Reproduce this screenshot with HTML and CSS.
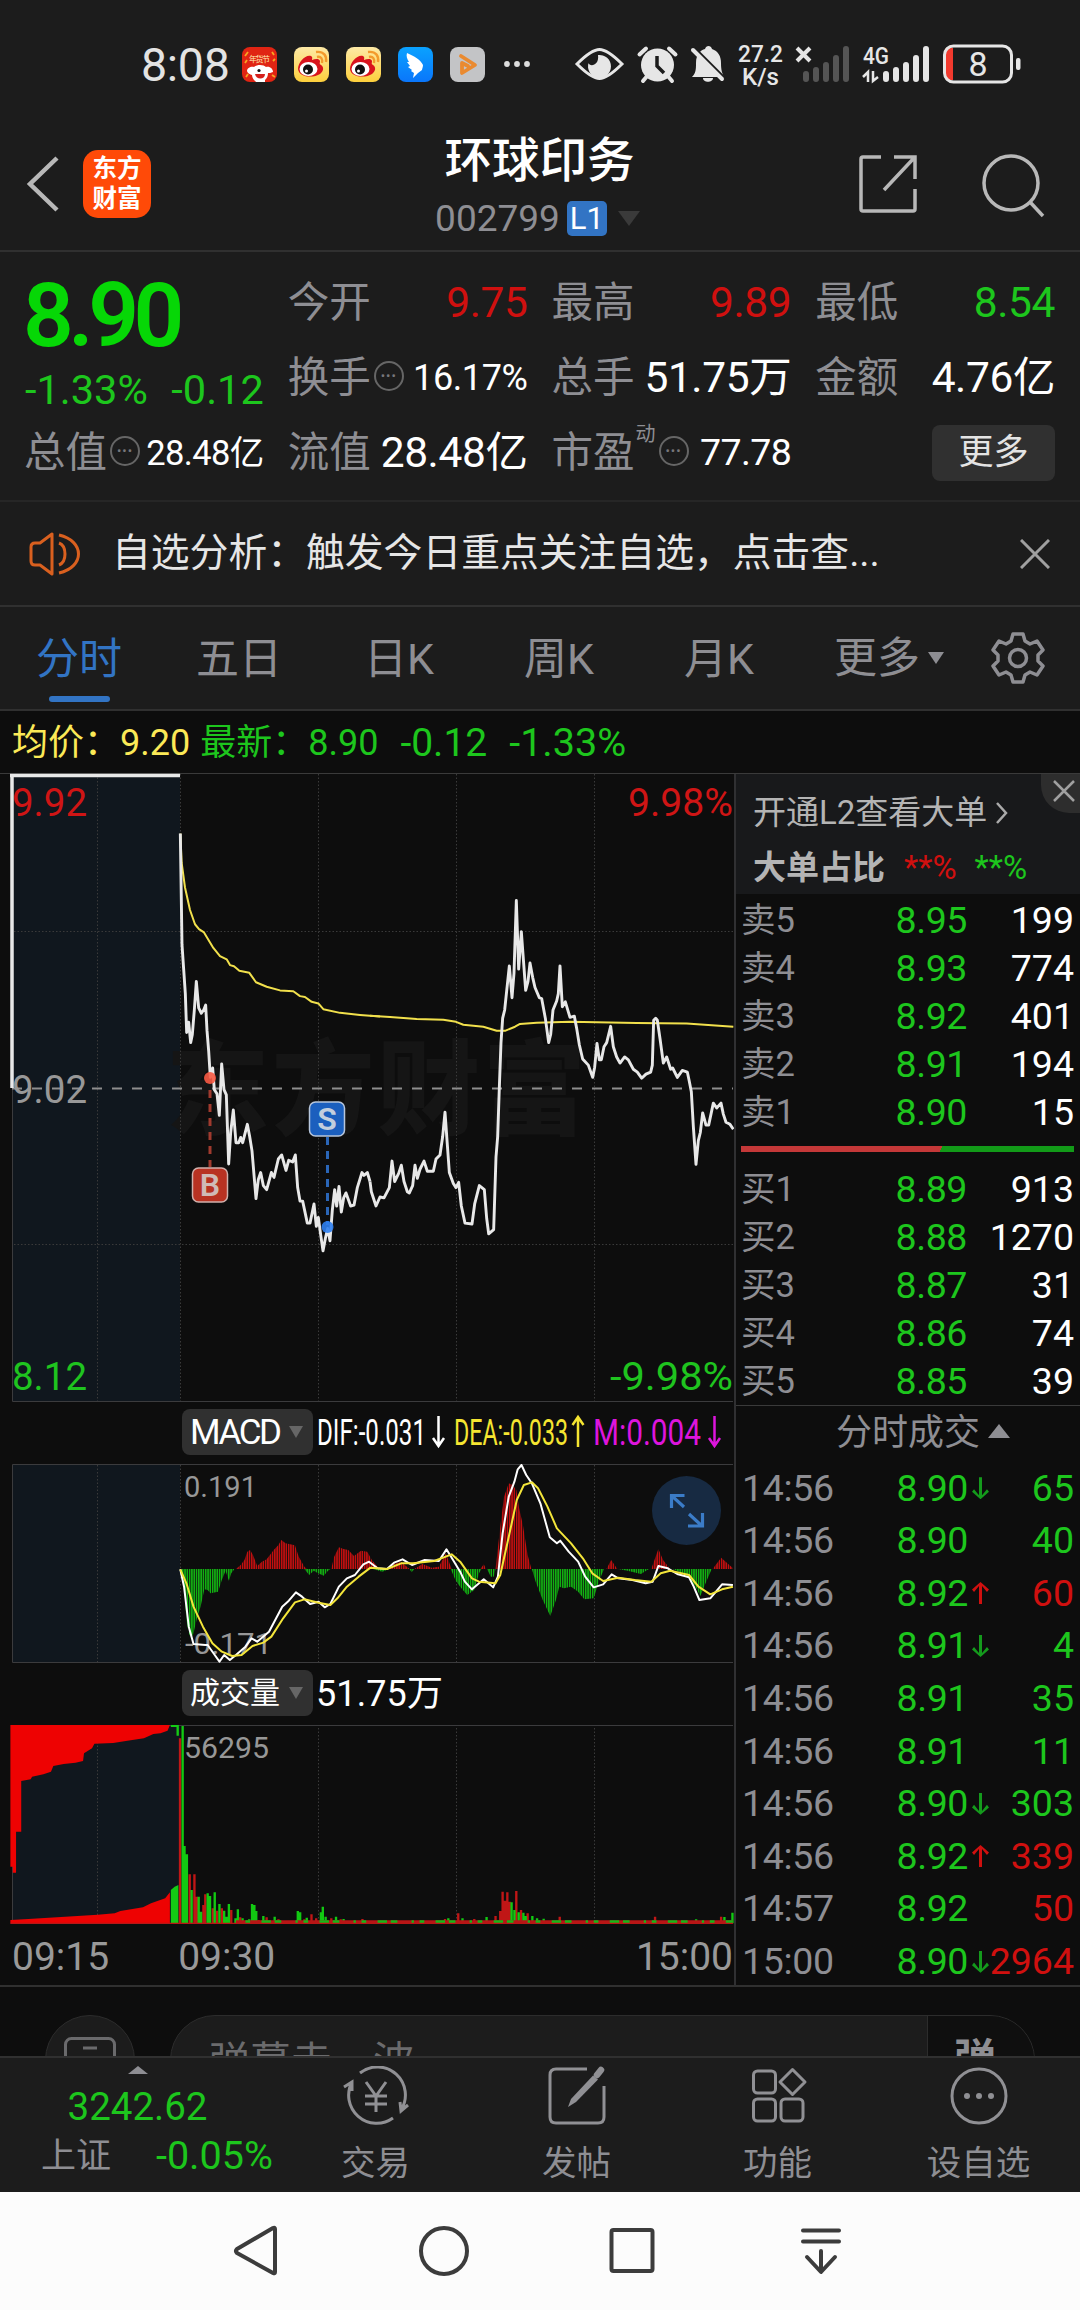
FILE: index.html
```html
<!DOCTYPE html>
<html lang="zh-CN">
<head>
<meta charset="utf-8">
<title>环球印务 002799</title>
<link rel="stylesheet" href="styles.css">
</head>
<body>
<div class="phone">

  <div class="status">
    <span class="clock">8:08</span>
    <svg class="apps" width="290" height="36" viewBox="0 0 290 36">
      <defs>
        <linearGradient id="gold" x1="0" y1="0" x2="0" y2="1"><stop offset="0" stop-color="#fde9a6"/><stop offset="1" stop-color="#fdcf3c"/></linearGradient>
        <linearGradient id="sky" x1="0" y1="0" x2="0" y2="1"><stop offset="0" stop-color="#0aa2ff"/><stop offset="1" stop-color="#0a76fb"/></linearGradient>
        <g id="weibo">
          <rect width="35" height="35" rx="8" fill="url(#gold)"/>
          <path d="M4 22C4 15 12 7 17 9c2 1 1 3 1 4 3-1 7-2 8 1 0 2-1 3 1 4 3 2 3 6-1 9-6 4-21 4-22-5z" fill="#d9131c"/>
          <ellipse cx="14.500" cy="22" rx="9" ry="7" fill="#fff"/>
          <circle cx="14" cy="22.500" r="5" fill="#111"/><circle cx="12.500" cy="24" r="1.500" fill="#fff"/>
          <path d="M23 10c4-1 6 2 5 6M22 5c8-1 11 4 10 10" fill="none" stroke="#f39a2c" stroke-width="2.400"/>
        </g>
      </defs>
      <rect width="35" height="35" rx="8" fill="#e02413"/>
      <path d="M3 9l3-4M3 16l2-3M30 5l2 3M31 14l2-2M4 30l2-3M30 28l3 2" stroke="#f6a623" stroke-width="1.800"/>
      <text x="7" y="15" font-size="8" fill="#ffe9b0" textLength="21">年货节</text>
      <path d="M5 24c0-3 4-5 7-4 4-3 10-2 12 0 4-1 7 2 7 5-2 1-4 1-5 1 0 3-1 5-3 7v2H14c-2-2-4-4-4-7-2-1-4-1-5-4z" fill="#fff"/>
      <path d="M13 27h10c0 6-9 6-10 0z" fill="#d4201c"/><circle cx="17" cy="23.500" r="1.600" fill="#111"/>
      <use href="#weibo" x="52"/><use href="#weibo" x="104"/>
      <g transform="translate(156 0)"><rect width="35" height="35" rx="8" fill="url(#sky)"/>
      <path d="M9 6c7 3 14 7 16 12 0 2-1 4-1 5l-4 3-5 5 1-5-3-2 1-1-4-3 2-1-3-4 2 0c-2-3-3-6-2-9z" fill="#fff"/></g>
      <g transform="translate(208 0)"><rect width="35" height="35" rx="8" fill="#c3c4c6"/>
      <path d="M11 9l14 9-13 8V16l6 3" fill="none" stroke="#ea8a2f" stroke-width="3.800" stroke-linecap="round" stroke-linejoin="round"/></g>
      <g fill="#ddd"><circle cx="265" cy="17" r="2.900"/><circle cx="275" cy="17" r="2.900"/><circle cx="285" cy="17" r="2.900"/></g>
    </svg>
    <svg class="sys" width="465" height="60" viewBox="0 0 465 60" fill="#e6e6e6">
      <path d="M12 28C22 18 29 13.500 34.500 13.500S47 18 57 28C47 38 40 42.500 34.500 42.500S22 38 12 28z" fill="none" stroke="#e6e6e6" stroke-width="3"/>
      <path d="M33 19A11.500 11.500 0 1 1 23.500 27c1 4 11 3 9.500-8z"/>
      <circle cx="92.500" cy="29" r="16.500"/><path d="M74.500 18.500l6.500-6M110.500 18.500l-6.500-6M78 45l5-6M107 45l-5-6" stroke="#e6e6e6" stroke-width="4" stroke-linecap="round"/>
      <path d="M92 20v10l7 7" fill="none" stroke="#1c1c1c" stroke-width="3.500"/>
      <path d="M127 41c4-4 4-8 4-14 0-9 5-13 9-14 1-4 6-4 7 0 6 2 9 7 9 14 0 7 1 10 3 14zM138 42h10c0 5-10 5-10 0z"/>
      <path d="M127 10l33 33" stroke="#1c1c1c" stroke-width="3.500"/><path d="M128 14l29 29" stroke="#e6e6e6" stroke-width="4" stroke-linecap="round"/>
      <text x="173" y="26" font-size="24" textLength="45" lengthAdjust="spacingAndGlyphs" font-weight="500">27.2</text>
      <text x="177" y="49" font-size="23" textLength="37" lengthAdjust="spacingAndGlyphs" font-weight="500">K/s</text>
      <path d="M232 12l13 13M245 12l-13 13" stroke="#e6e6e6" stroke-width="4"/>
      <g stroke="#555" stroke-width="6" stroke-linecap="round"><path d="M241 38v5M251 34v9M261 29v14M271 22v21M281 13v30"/></g>
      <text x="298" y="28" font-size="24" textLength="26" lengthAdjust="spacingAndGlyphs" font-weight="500">4G</text>
      <path d="M303 46V36l-5 5M308 35v10l5-4" fill="none" stroke="#e6e6e6" stroke-width="2.500"/>
      <g stroke="#e6e6e6" stroke-width="6" stroke-linecap="round"><path d="M321 38v5M331 34v9M341 29v14M351 22v21M361 13v30"/></g>
      <path d="M381 12h7v32h-7c-1 0-1-3-1-6V18c0-3 0-6 1-6z" fill="#f23a2e"/>
      <rect x="379.500" y="10" width="67" height="36" rx="9" fill="none" stroke="#e6e6e6" stroke-width="3"/>
      <rect x="451" y="22" width="4.500" height="12" rx="2"/>
      <text x="403.500" y="40" font-size="34">8</text>
    </svg>
  </div>

  <header class="head">
    <svg class="back" width="34" height="56" viewBox="0 0 34 56" fill="none" stroke="#b8b8b8" stroke-width="4.500"><path d="M31 2L4 28l27 26"/></svg>
    <div class="logo"><span>东方</span><span>财富</span></div>
    <div class="title">
      <h1>环球印务</h1>
      <div class="code"><span>002799</span><b>L1</b><i class="tri"></i></div>
    </div>
    <svg class="share" width="62" height="62" viewBox="0 0 62 62" fill="none" stroke="#b8b8b8" stroke-width="3.500"><path d="M23 4H5q-2 0-2 2v50q0 2 2 2h50q2 0 2-2V36M26 37L56 5M36 4h21v22"/></svg>
    <svg class="search" width="66" height="66" viewBox="0 0 66 66" fill="none" stroke="#b8b8b8" stroke-width="3.500"><circle cx="30" cy="30" r="27"/><path d="M49 49l13 14"/></svg>
  </header>

  <section class="quote">
    <div class="now"><strong>8.90</strong><span class="chg"><em>-1.33%</em><em>-0.12</em></span></div>
    <div class="cell"><label>今开</label><span class="n red">9.75</span></div>
    <div class="cell"><label>最高</label><span class="n red">9.89</span></div>
    <div class="cell"><label>最低</label><span class="n green">8.54</span></div>
    <div class="cell"><label>换手</label><i class="dots">•••</i><span class="n s35">16.17%</span></div>
    <div class="cell"><label>总手</label><span class="n">51.75万</span></div>
    <div class="cell"><label>金额</label><span class="n">4.76亿</span></div>
    <div class="cell"><label>总值</label><i class="dots">•••</i><span class="n s34">28.48亿</span></div>
    <div class="cell"><label>流值</label><span class="n">28.48亿</span></div>
    <div class="cell"><label>市盈<sup>动</sup></label><i class="dots late">•••</i><span class="n s37">77.78</span></div>
    <div class="cell last"><button>更多</button></div>
  </section>

  <section class="notice">
    <svg width="52" height="44" viewBox="0 0 52 44" fill="none" stroke="#d9601f" stroke-width="3"><path d="M23 2v40L11 33H6q-4 0-4-4V15q0-4 4-4h5zM30 11c8 3 8 19 0 22M30 3c26 6 26 32 0 38" stroke-linejoin="round"/></svg>
    <p>自选分析：触发今日重点关注自选，点击查...</p>
    <svg width="30" height="30" viewBox="0 0 30 30" stroke="#a0a0a0" stroke-width="3"><path d="M1 1l28 28M29 1L1 29"/></svg>
  </section>

  <nav class="tabs">
    <a class="on">分时</a><a>五日</a><a>日K</a><a>周K</a><a>月K</a>
    <a class="more">更多<i class="tri"></i></a>
    <svg width="54" height="54" viewBox="0 0 54 54" fill="none" stroke="#8e8e93" stroke-width="3.500" stroke-linejoin="round"><path d="M22 3h10l2 7 5 3 7-3 6 9-5 5v6l5 5-6 9-7-3-5 3-2 7H22l-2-7-5-3-7 3-6-9 5-5v-6l-5-5 6-9 7 3 5-3z"/><circle cx="27" cy="27" r="8.500"/></svg>
  </nav>

  <div class="latest"><span class="avg">均价：9.20</span><span>最新：8.90</span><span class="d">-0.12</span><span class="p">-1.33%</span></div>

  <main class="board">
    <div class="charts">
      <svg class="plot" width="734" height="629" viewBox="0 773 734 629">
        <rect x="12" y="774" width="168" height="627" fill="#10171e"/>
        <text x="166" y="1127" font-size="103" font-weight="900" fill="#151515" textLength="420">东方财富</text>
        <g stroke="#3a3a3a" stroke-width="1" stroke-dasharray="1.500 2">
          <path d="M97.500 774V1401M180.500 774V1401M318.500 774V1401M456.500 774V1401M594.500 774V1401M14 931.500H733M14 1244.500H733"/>
        </g>
        <path d="M12.500 774V1401.500H733" fill="none" stroke="#3b3b3d"/>
        <path d="M12 1088.500H733" stroke="#8e8e8e" stroke-width="2" stroke-dasharray="10 10"/>
        <g font-size="39">
          <text x="12" y="816" fill="#cf1515" textLength="75" lengthAdjust="spacingAndGlyphs">9.92</text>
          <text x="12" y="1103" fill="#989898" textLength="75" lengthAdjust="spacingAndGlyphs">9.02</text>
          <text x="12" y="1390" fill="#1fc41f" textLength="75" lengthAdjust="spacingAndGlyphs">8.12</text>
          <text x="628" y="816" fill="#cf1515" textLength="105" lengthAdjust="spacingAndGlyphs">9.98%</text>
          <text x="610" y="1390" fill="#1fc41f" textLength="123" lengthAdjust="spacingAndGlyphs">-9.98%</text>
        </g>
        <path d="M12 1088V776" stroke="#e8e8e8" stroke-width="3.500"/><path d="M10 775.500H180" stroke="#e8e8e8" stroke-width="3.500"/>
        <g class="line" transform="translate(0 765) scale(.33333 .40833)">
          <polyline stroke="#f1e04c" stroke-width="2" points="541,168 545,240 555,300 570,355 585,390 597,402 612,410 640,448 660,468 680,476 690,490 702,493 718,504 748,509 768,532 800,543 840,552 880,554 900,566 915,568 935,580 955,584 970,598 1020,607 1080,612 1140,616"/>
          <polyline stroke="#e8e8e8" stroke-width="2.900" points="541,168 546,440 551,500 556,560 560,655 566,630 572,680 577,660 583,600 589,530 596,595 604,608 611,600 617,588 621,650 626,700 631,765 638,742 643,795 651,805 658,858 665,732 672,795 679,808 686,977 692,900 700,845 708,925 716,925 722,912 728,925 742,880 749,910 756,945 768,1062 775,1015 782,998 790,1030 800,1040 814,998 822,1010 835,965 845,955 858,993 866,968 878,972 886,955 893,1035 900,1068 908,1068 922,1122 930,1122 942,1075 949,1130 955,1108 962,1150 969,1190 976,1160 983,1135 990,1165 997,1090 1004,1040 1010,1080 1017,1032 1024,1095 1031,1060 1038,1048 1052,1080 1062,1078 1072,1035 1086,998 1092,1005 1102,998 1110,1020"/>
        </g>
        <g class="line" transform="translate(370 765) scale(.33333 .40833)">
          <polyline stroke="#f1e04c" stroke-width="2" points="0,614 60,617 140,622 220,624 258,629 280,636 340,641 380,651 405,651 435,641 450,634 500,631 600,629 800,632 950,633 1090,641"/>
          <polyline stroke="#e8e8e8" stroke-width="2.900" points="0,1020 4,1045 18,1080 30,1058 42,1060 58,1035 66,970 74,1020 86,1000 94,980 102,1020 112,1045 118,1048 128,1030 135,980 142,1012 150,990 162,970 172,995 190,995 198,965 210,955 218,910 225,850 232,930 238,998 250,1025 258,1035 266,1022 274,1080 285,1122 306,1124 314,1075 328,1030 343,1040 350,1110 356,1148 371,1138 378,960 383,910 388,790 393,680 398,620 404,600 418,492 426,570 432,510 439,332 446,500 454,408 460,475 467,552 474,530 480,485 488,520 495,545 508,570 515,572 526,620 536,680 542,660 549,600 560,578 565,560 570,492 577,592 586,580 600,618 613,615 620,645 628,685 638,720 655,735 668,765 674,740 681,682 688,722 694,722 702,690 710,680 722,640 730,690 740,715 750,730 764,715 775,722 790,745 802,752 815,767 828,757 842,752 847,735 851,625 857,620 862,625 870,670 880,730 890,715 902,745 908,742 922,765 937,748 952,752 958,775 964,800 970,885 978,978 985,920 991,900 998,852 1008,882 1016,882 1030,828 1040,840 1053,828 1060,855 1068,875 1080,880 1090,892"/>
        </g>
        <path d="M210 1090V1167" stroke="#a03a2e" stroke-width="3" stroke-dasharray="8 6"/><circle cx="210" cy="1078" r="6" fill="#f85a44" opacity=".9"/>
        <rect x="192.500" y="1168" width="35" height="34" rx="6" fill="#b83222" stroke="#d0b0ac" stroke-width="1.500"/>
        <text x="210" y="1196" font-size="32" font-weight="600" fill="#cfbab6" text-anchor="middle">B</text>
        <path d="M327.500 1137V1225" stroke="#2a66b8" stroke-width="3" stroke-dasharray="8 6"/><circle cx="327.500" cy="1227" r="6" fill="#2f7ff0" opacity=".9"/>
        <rect x="309.500" y="1102" width="35" height="34" rx="6" fill="#1b5fbe" stroke="#b7c6dc" stroke-width="1.500"/>
        <text x="327" y="1130" font-size="32" font-weight="600" fill="#c3cedd" text-anchor="middle">S</text>
      </svg>

      <div class="ind">
        <span class="pick"><span class="macd">MACD</span><i class="tri"></i></span>
        <svg width="410" height="46" viewBox="316 1409 410 46" font-size="36">
          <text x="317" y="1445" fill="#fff" textLength="109" lengthAdjust="spacingAndGlyphs">DIF:-0.031</text>
          <text x="454" y="1445" fill="#f5e531" textLength="114" lengthAdjust="spacingAndGlyphs">DEA:-0.033</text>
          <text x="593" y="1445" fill="#dd15dd" textLength="108" lengthAdjust="spacingAndGlyphs">M:0.004</text>
          <g fill="none" stroke-width="2.500"><path d="M438.500 1416V1446M433 1438L438.500 1446L444 1438" stroke="#fff"/><path d="M578 1447V1418M572.500 1425L578 1417L583.500 1425" stroke="#f5e531"/><path d="M714.500 1416V1446M709 1438L714.500 1446L720 1438" stroke="#dd15dd"/></g>
        </svg>
      </div>

      <svg class="plot" width="734" height="199" viewBox="0 1464 734 199">
        <defs>
          <pattern id="rb" width="4.880" height="10" patternUnits="userSpaceOnUse"><rect width="3.400" height="10" fill="#c20f0f"/></pattern>
          <pattern id="gb" width="4.880" height="10" patternUnits="userSpaceOnUse"><rect width="3.400" height="10" fill="#12b012"/></pattern>
        </defs>
        <rect x="12" y="1465" width="168" height="197" fill="#10171e"/>
        <path d="M97.500 1465V1662M180.500 1465V1662M318.500 1465V1662M456.500 1465V1662M594.500 1465V1662" stroke="#3a3a3a" stroke-dasharray="1.500 2"/>
        <path d="M733 1464.500H12.500V1662.500H733" fill="none" stroke="#3b3b3d"/>
        <g font-size="30" fill="#979797"><text x="184" y="1497" textLength="73" lengthAdjust="spacingAndGlyphs">0.191</text><text x="185" y="1654" textLength="87" lengthAdjust="spacingAndGlyphs">-0.171</text></g>
        <g transform="translate(0 1400) scale(.47194 .33333)">
          <path fill="url(#rb)" d="M500,507L510,495 518,480 524,455 530,450 536,465 545,498 555,485 565,478 580,450 590,435 596,420 605,430 625,436 633,470 645,500 650,507ZM702,507L708,470 718,442 728,447 738,450 750,468 765,452 778,455 788,480 800,500 805,507ZM825,507L835,492 850,485 862,500 868,507ZM878,507L895,492 915,503 930,500 945,460 955,500 957,507ZM1018,507L1025,493 1030,507ZM1050,507L1060,380 1068,290 1078,250 1086,255 1094,270 1100,325 1108,375 1118,465 1126,507ZM1285,507L1295,480 1308,507ZM1380,507L1395,447 1405,480 1420,507ZM1510,507L1528,473 1552,503V507Z"/>
          <path fill="url(#gb)" d="M384,507L390,560 395,660 400,700 405,715 410,700 418,650 425,620 433,568 440,570 446,580 462,575 470,540 478,512 485,542 490,520 497,507ZM645,507L655,525 665,512 672,518 686,527 695,512 700,507ZM790,507L810,515 825,507ZM868,507L872,517 878,507ZM955,507L965,540 975,560 990,585 1005,570 1015,520 1020,507ZM1032,507L1040,530 1046,530 1050,507ZM1127,507L1135,545 1150,600 1166,648 1178,600 1185,560 1195,565 1210,560 1225,575 1238,598 1258,595 1270,540 1280,507ZM1310,507L1330,512 1358,522 1375,507ZM1425,507L1440,515 1460,535 1472,555 1484,588 1495,550 1508,507Z"/>
          <g class="line" stroke-width="2">
            <polyline stroke="#fff" points="382,508 390,560 400,680 410,732 435,735 440,735 455,765 465,785 475,765 487,780 500,765 520,740 533,715 545,725 570,695 598,620 612,602 627,577 640,590 657,612 675,605 688,622 700,612 718,560 735,535 752,525 770,493 782,485 800,505 820,507 835,488 853,478 873,495 900,480 930,483 946,448 960,480 975,515 985,545 1000,568 1025,538 1045,562 1055,530 1065,400 1078,290 1090,245 1097,208 1105,195 1115,225 1127,250 1145,310 1165,412 1180,430 1187,422 1205,455 1225,485 1240,530 1258,562 1278,553 1296,523 1310,535 1340,540 1368,550 1383,545 1395,498 1415,505 1435,522 1460,532 1470,560 1482,600 1505,595 1530,553 1553,555"/>
            <polyline stroke="#f3e53a" points="382,508 395,550 410,620 430,680 450,730 470,755 492,768 512,765 535,738 558,728 575,710 600,655 625,607 645,598 675,608 700,615 715,595 735,560 760,530 785,503 820,507 850,490 875,490 920,483 957,463 975,485 1000,535 1015,545 1050,550 1060,525 1075,430 1095,300 1110,255 1127,247 1140,265 1160,320 1180,385 1210,430 1235,475 1255,520 1278,543 1310,533 1345,540 1380,545 1400,520 1420,512 1460,525 1480,560 1505,583 1530,568 1553,560"/>
          </g>
        </g>
        <circle cx="686.500" cy="1510.500" r="34.500" fill="#172a42"/>
        <path d="M684 1507L672 1496M671.500 1508V1495.500H684.500M689 1514L702 1526M702.500 1513V1526H688" fill="none" stroke="#3b7cc8" stroke-width="3.200"/>
      </svg>

      <div class="ind vol">
        <span class="pick"><span>成交量</span><i class="tri"></i></span><span class="v">51.75万</span>
      </div>

      <svg class="plot" width="734" height="199" viewBox="0 1725 734 199">
        <rect x="12" y="1726" width="168" height="197" fill="#10171e"/>
        <path d="M97.500 1728V1923M318.500 1728V1923M456.500 1728V1923M594.500 1728V1923" stroke="#3a3a3a" stroke-dasharray="1.500 2"/>
        <path d="M733 1725.500H12.500V1923.500H733" fill="none" stroke="#3b3b3d"/>
        <text x="184" y="1758" font-size="30" fill="#979797" textLength="85" lengthAdjust="spacingAndGlyphs">56295</text>
        <g transform="translate(0 1660) scale(.47194 .33333)">
          <path fill="#ee0202" d="M22,195H360L355,212 340,220 325,222 305,235 270,242 240,249 200,251 195,265 178,280 176,303 160,308 135,312 113,318 108,335 92,343 68,350 65,358 45,363V515H34V638H27V620H22ZM22,790V780L60,777 207,764 243,760 255,753 303,742 320,730 350,715 360,697V790Z"/>
          <path fill="#14cc14" d="M362,195H379V227H374V201H362ZM362,790V690L370,680 378,675V790Z"/>
          <path stroke="#c01616" stroke-width="5" d="M381.500,790V235M402,790V643M412,790V643M417,790V710M431,790V735M435,790V703M451,790V745M460,790V752M470,790V745M490,790V750M509,790V772M548,790V780M565,790V772M590,790V778M645,790V778M660,790V763M670,790V775M702,790V775M722,790V778M768,790V777M943,790V777M971,790V760M1005,790V777M1050,790V768M1060,790V753M1065,790V695M1070,790V722M1075,790V697M1080,790V725M1094,790V693M1104,790V750M1118,790V760M1186,790V770M1388,790V770M1528,790V770"/>
          <path stroke="#12c912" stroke-width="5" d="M387,790V198M391,790V558M396,790V583M406,790V690M421,790V710M426,790V755M440,790V700M445,790V708M455,790V697M465,790V732M475,790V752M480,790V770M485,790V732M499,790V775M504,790V748M514,790V775M528,790V778M534,790V732M539,790V735M543,790V753M558,790V768M582,790V770M631,790V753M636,790V757M650,790V773M680,790V757M684,790V740M690,790V770M712,790V770M728,790V777M950,790V775M980,790V775M1031,790V771M1084,790V727M1090,790V750M1099,790V757M1109,790V758M1114,790V768M1128,790V768M1138,790V775M1152,790V776M1475,790V778M1535,790V771M1552,790V758"/>
          <path stroke="#b81616" stroke-width="9" d="M500,785H1553"/>
          <path stroke="#18b818" stroke-width="9" stroke-dasharray="10 24 20 8 14 30 5 12" d="M520,785H1553"/>
          <path stroke="#b81616" stroke-width="4" d="M22,790H1553"/>
        </g>
      </svg>

      <div class="times"><span>09:15</span><span class="open">09:30</span><span class="end">15:00</span></div>
    </div>

    <aside class="depth">
      <div class="promo">
        <p>开通L2查看大单<svg width="12" height="22" viewBox="0 0 12 22" fill="none" stroke="#aaa" stroke-width="2.500"><path d="M1 1l9 10-9 10"/></svg></p>
        <p class="share-row"><b>大单占比</b><span class="red">**%</span><span class="green">**%</span></p>
        <span class="close"><svg width="22" height="22" viewBox="0 0 22 22" stroke="#a0a0a0" stroke-width="2.500"><path d="M1 1l20 20M21 1L1 21"/></svg></span>
      </div>
      <ul class="book">
        <li><span>卖5</span><b>8.95</b><em>199</em></li>
        <li><span>卖4</span><b>8.93</b><em>774</em></li>
        <li><span>卖3</span><b>8.92</b><em>401</em></li>
        <li><span>卖2</span><b>8.91</b><em>194</em></li>
        <li><span>卖1</span><b>8.90</b><em>15</em></li>
      </ul>
      <div class="ratio"></div>
      <ul class="book">
        <li><span>买1</span><b>8.89</b><em>913</em></li>
        <li><span>买2</span><b>8.88</b><em>1270</em></li>
        <li><span>买3</span><b>8.87</b><em>31</em></li>
        <li><span>买4</span><b>8.86</b><em>74</em></li>
        <li><span>买5</span><b>8.85</b><em>39</em></li>
      </ul>
      <div class="ticks-title">分时成交<i class="tri up"></i></div>
      <ul class="ticks">
        <li><span>14:56</span><b>8.90</b><i class="dn"></i><em>65</em></li>
        <li><span>14:56</span><b>8.90</b><i></i><em>40</em></li>
        <li><span>14:56</span><b>8.92</b><i class="upw"></i><em class="red">60</em></li>
        <li><span>14:56</span><b>8.91</b><i class="dn"></i><em>4</em></li>
        <li><span>14:56</span><b>8.91</b><i></i><em>35</em></li>
        <li><span>14:56</span><b>8.91</b><i></i><em>11</em></li>
        <li><span>14:56</span><b>8.90</b><i class="dn"></i><em>303</em></li>
        <li><span>14:56</span><b>8.92</b><i class="upw"></i><em class="red">339</em></li>
        <li><span>14:57</span><b>8.92</b><i></i><em class="red">50</em></li>
        <li><span>15:00</span><b>8.90</b><i class="dn"></i><em class="red">2964</em></li>
      </ul>
    </aside>
  </main>

  <div class="danmu">
    <div class="round"><svg width="52" height="46" viewBox="0 0 52 46" fill="none" stroke="#6a6a6c" stroke-width="3"><rect x="1.500" y="1.500" width="49" height="42" rx="6"/><path d="M19 11h14"/></svg></div>
    <div class="field"><span>弹幕走一波</span><b>弹</b></div>
  </div>

  <nav class="bottom">
    <div class="index">
      <i class="tri up"></i>
      <strong>3242.62</strong>
      <span class="sh"><label>上证</label><em>-0.05%</em></span>
    </div>
    <a><svg width="66" height="60" viewBox="0 0 66 60" fill="none" stroke="#909094" stroke-width="3"><path d="M17 7A28 28 0 0 1 58 44M50 52A28 28 0 0 1 9 16M1 21l8-5v9M65 39l-7 6-1-9"/><path d="M23 16l10 14 10-14M33 30v16M22 30h22M22 38h22"/></svg>交易</a>
    <a><svg width="66" height="60" viewBox="0 0 66 60" fill="none" stroke="#909094" stroke-width="3"><path d="M43 3H12q-6 0-6 6v42q0 6 6 6h42q6 0 6-6V20"/><path d="M49 9.500l5 4L32 36l-8 5 3-8z" fill="#909094" stroke="none"/><path d="M53 9l4-5" stroke-width="6.500" stroke-linecap="round"/></svg>发帖</a>
    <a><svg width="66" height="60" viewBox="0 0 66 60" fill="none" stroke="#909094" stroke-width="3"><rect x="8.500" y="5" width="22" height="22" rx="4"/><rect x="8.500" y="33" width="22" height="22" rx="4"/><rect x="36" y="33" width="22" height="22" rx="4"/><path d="M47.500 3.500L60 16 47.500 28.500 35 16z" stroke-linejoin="round"/></svg>功能</a>
    <a><svg width="66" height="60" viewBox="0 0 66 60" fill="none" stroke="#909094" stroke-width="3"><circle cx="33" cy="30" r="27"/><g fill="#909094" stroke="none"><circle cx="21" cy="30" r="3"/><circle cx="33" cy="30" r="3"/><circle cx="45" cy="30" r="3"/></g></svg>设自选</a>
  </nav>

  <div class="sysnav">
    <svg width="1080" height="118" viewBox="0 2192 1080 118" fill="none" stroke="#3c3c3c" stroke-width="4" stroke-linejoin="round" stroke-linecap="round">
      <path d="M275 2229v43q0 2-2 1l-36-20q-2-2 0-4l36-21q2-1 2 1z"/>
      <circle cx="444" cy="2251" r="23"/><rect x="611.500" y="2230" width="41" height="41" rx="2"/>
      <path d="M803 2230.500h36M803 2241.500h36M821 2251v20M807 2257l14 15 14-15"/>
    </svg>
  </div>
</div>
</body>
</html>
```
FILE: styles.css
```css
* { box-sizing: border-box; margin: 0; padding: 0; }
body {
  width: 1080px;
  background: #1c1c1c;
  color: #fff;
  font-family: Roboto, "Noto Sans CJK SC", sans-serif;
  line-height: 1;
}
.phone { width: 1080px; height: 2310px; display: flex; flex-direction: column; overflow: hidden; }
.phone > * { flex: none; }
svg { display: block; flex: none; }
svg text { font-family: Roboto, "Noto Sans CJK SC", sans-serif; }
em, i { font-style: normal; }
ul { list-style: none; }
.red { color: #d0100f; }
.green { color: #1dc61d; }
.tri {
  display: inline-block;
  border: solid transparent;
  border-width: 14px 10px 0;
  border-top-color: #4a4a4a;
}
.tri.up { border-width: 0 10px 13px; border-bottom-color: #8e8e93; }

.status { height: 130px; padding: 36px 0 0 141px; display: flex; align-items: flex-start; }
.clock { width: 101px; font-size: 46.500px; line-height: 58px; letter-spacing: -.3px; color: #e3e3e3; }
.apps { margin-top: 11px; }
.sys { margin-left: 33px; }

.head { height: 122px; padding: 0 33px 0 26px; display: flex; align-items: center; border-bottom: 2px solid #303030; }
.back { margin-top: -12px; }
.logo {
  width: 68px; height: 68px; margin: -13px 0 0 23px; border-radius: 15px; background: #ff4a08;
  display: flex; flex-direction: column; justify-content: center; gap: 4px; align-items: center;
  font-size: 24.500px; font-weight: 700; line-height: 26px;
}
.title { flex: none; width: 700px; margin-top: -10px; padding-left: 77px; display: flex; flex-direction: column; align-items: center; }
h1 { font-size: 47.500px; font-weight: 500; line-height: 58px; }
.code { display: flex; align-items: center; font-size: 37px; line-height: 40px; color: #8e8e93; margin: 9px 4px 0 0; }
.code b { width: 40px; height: 35px; margin: 0 11px 0 7px; border-radius: 5px; background: #3274c4; color: #fff; font-size: 31px; font-weight: 400; line-height: 36px; text-align: center; }
.code .tri { border-width: 15px 11px 0; border-top-color: #3a3a3a; }
.share { margin: -12px 61px 0 auto; }
.search { margin-top: -8px; }

.quote {
  height: 250px; padding: 13px 25px 9px 26px;
  display: grid; grid-template-columns: repeat(4, 1fr); grid-template-rows: repeat(3, 75px); column-gap: 26px;
  border-bottom: 2px solid #262626;
}
.now { grid-row: span 2; }
.now strong { display: block; margin: 10px 0 0 -3px; font-size: 89px; line-height: 82px; font-weight: 600; letter-spacing: -5.500px; color: #06d706; }
.chg { display: flex; justify-content: space-between; margin: 13px 0 0 -1px; font-size: 41.500px; line-height: 40px; color: #1dc61d; }
.cell { display: flex; align-items: center; height: 75px; padding-top: 1px; }
.cell label { margin-left: -2px; font-size: 41.500px; color: #8e8e93; position: relative; white-space: nowrap; }
.cell sup { position: absolute; left: 84px; top: -8px; font-size: 20px; line-height: 20px; }
.n { margin-left: auto; font-size: 42.500px; letter-spacing: -.4px; white-space: nowrap; }
.s35 { font-size: 36px; letter-spacing: -.4px; }
.s34 { font-size: 34.500px; letter-spacing: -.6px; }
.s37 { font-size: 37.500px; letter-spacing: -.6px; }
.dots { width: 30px; height: 30px; margin: -4px 0 0 3px; border: 2px solid #666; border-radius: 50%; font-size: 13px; line-height: 26px; text-align: center; color: #77777b; letter-spacing: 1px; }
.dots.late { margin-left: 24px; }
.last { justify-content: flex-end; padding: 0; }
.cell button { width: 123px; height: 56px; border: 0; border-radius: 8px; background: #303030; color: #e4e4e4; font: 35px/50px Roboto, "Noto Sans CJK SC", sans-serif; }

.notice { height: 105px; padding: 0 30px 0 29px; display: flex; align-items: center; border-bottom: 2px solid #303030; }
.notice p { flex: 1; margin-left: 31px; font-size: 38.800px; color: #e6e6e6; white-space: nowrap; }

.tabs { height: 104px; padding: 0 35px 0 0; display: flex; align-items: center; border-bottom: 2px solid #303030; color: #8e8e93; font-size: 43px; }
.tabs a { width: 160px; line-height: 106px; height: 104px; text-align: center; position: relative; left: -1px; white-space: nowrap; }
.tabs a.on { color: #3274c4; }
.tabs a.on::after { content: ""; position: absolute; left: 50px; bottom: 8px; width: 61px; height: 6px; border-radius: 3px; background: #3274c4; }
.tabs .more { width: 145px; margin: 0 auto 0 0; display: flex; align-items: center; justify-content: flex-end; gap: 8px; }
.tabs .more .tri { border-width: 12px 8px 0; border-top-color: #8e8e93; }

.latest { height: 62px; padding-left: 12px; display: flex; align-items: center; background: #0d0d0d; color: #1dc61d; font-size: 36px; white-space: nowrap; }
.latest span { padding-top: 2px; }
.avg { color: #fbe957; margin-right: 10px; }
.latest .d { margin: 0 22px 0 22px; font-size: 39px; }
.latest .p { font-size: 39.500px; }

.board { height: 1214px; display: flex; background: #0d0d0d; border-top: 1px solid #3a3a3a; border-bottom: 2px solid #303030; }
.charts { width: 734px; height: 1213px; margin-top: -1px; }
.line polyline { fill: none; vector-effect: non-scaling-stroke; stroke-linejoin: round; }
.ind { height: 62px; padding: 7px 0 0 182px; display: flex; }
.pick { width: 131px; height: 46px; margin-right: 3px; padding: 0 10px 0 8px; display: flex; align-items: center; justify-content: space-between; border-radius: 8px; background: #303030; font-size: 30px; white-space: nowrap; }
.pick .tri { border-width: 12px 7px 0; border-top-color: #666; }
.macd { font-size: 35px; letter-spacing: -2.400px; }
.v { font-size: 36px; line-height: 48px; letter-spacing: .1px; }
.times { height: 62px; padding: 5px 1px 0 12px; display: flex; align-items: center; font-size: 39px; color: #999; }
.open { margin-left: 69px; }
.end { margin-left: auto; }

.depth { width: 346px; height: 1212px; border-left: 2px solid #303032; }
.promo { height: 120px; padding: 18px 0 0 17px; position: relative; background: #18191b; color: #b4b4b4; font-size: 33px; white-space: nowrap; }
.promo p { display: flex; align-items: center; line-height: 42px; }
.promo p svg { margin-left: 9px; }
.promo .share-row { margin-top: 13px; }
.share-row .red { margin-left: 19px; }
.share-row .green { margin-left: 18px; }
.close { position: absolute; top: 0; right: 0; width: 39px; height: 39px; padding: 6px 0 0 12px; border-bottom-left-radius: 28px; background: #2d2d2d; }
.book { padding: 2px 6px 0 5px; }
.book li { display: grid; grid-template-columns: 56px 170px 1fr; align-items: center; height: 48px; padding-top: 1px; }
.book span { font-size: 34.500px; color: #8e8e93; }
.book b { text-align: right; font-size: 37.500px; font-weight: 400; letter-spacing: -.4px; color: #1dc61d; }
.book em { text-align: right; font-size: 37.500px; }
.ratio { height: 6px; margin: 10px 6px 11px 5px; background: linear-gradient(115deg, #c43838 60%, #129a18 60%); }
.ticks-title { height: 57px; display: flex; align-items: center; justify-content: center; gap: 8px; border-top: 1px solid #3a3a3a; font-size: 36px; color: #8e8e93; padding: 0 0 2px 30px; }
.ticks-title .tri { margin-top: -5px; border-width: 0 11px 14px; }
.ticks li { display: grid; grid-template-columns: 90px 136px 26px 1fr; align-items: center; height: 52.600px; padding: 0 6px 0 6px; font-size: 37.500px; color: #1dc61d; }
.ticks span { color: #8e8e93; letter-spacing: -.3px; }
.ticks b { text-align: right; font-weight: 400; letter-spacing: -.4px; }
.ticks em { text-align: right; margin-left: -10px; }
.ticks i { width: 17px; height: 22px; margin-left: 4px; background: #149a1c; clip-path: polygon(41% 0, 59% 0, 59% 82%, 88% 54%, 100% 66%, 50% 100%, 0 66%, 12% 54%, 41% 82%); }
.ticks i:not([class]) { visibility: hidden; }
.ticks i.upw { background: #d0100f; transform: rotate(180deg); }

.danmu { height: 69px; padding: 28px 45px 0; display: flex; align-items: flex-start; gap: 35px; overflow: hidden; background: #0d0d0d; }
.round { width: 90px; height: 90px; flex: none; border: 1px solid #2c2c2c; border-radius: 50%; background: #1c1c1c; padding: 21px 0 0 18px; }
.field { width: 865px; height: 90px; display: flex; justify-content: space-between; border: 1px solid #2c2c2c; border-radius: 45px; overflow: hidden; background: #1c1c1c; color: #6b6b6d; font-size: 41px; line-height: 92px; padding-left: 38px; }
.field b { width: 107px; padding-left: 26px; border-left: 1px solid #2c2c2c; background: #0f0f0f; color: #8e8e93; font-size: 42px; line-height: 88px; }

.bottom { height: 136px; display: flex; border-top: 2px solid #303030; background: #1c1c1c; color: #8e8e93; }
.index { width: 275px; display: flex; flex-direction: column; align-items: center; padding-top: 8px; }
.index .tri { border-width: 0 10px 8px; }
.index strong { margin-top: 13px; font-size: 38.500px; line-height: 40px; font-weight: 400; color: #1dc61d; }
.sh { display: flex; align-items: center; align-self: stretch; margin-top: 9px; padding-left: 41px; height: 40px; }
.sh label { width: 115px; font-size: 35px; }
.sh em { font-size: 39.500px; color: #1dc61d; }
.bottom a { width: 201px; display: flex; flex-direction: column; align-items: center; padding-top: 8px; font-size: 34.500px; line-height: 40px; gap: 17px; }
.sysnav { height: 118px; background: #fcfcfc; }
```
